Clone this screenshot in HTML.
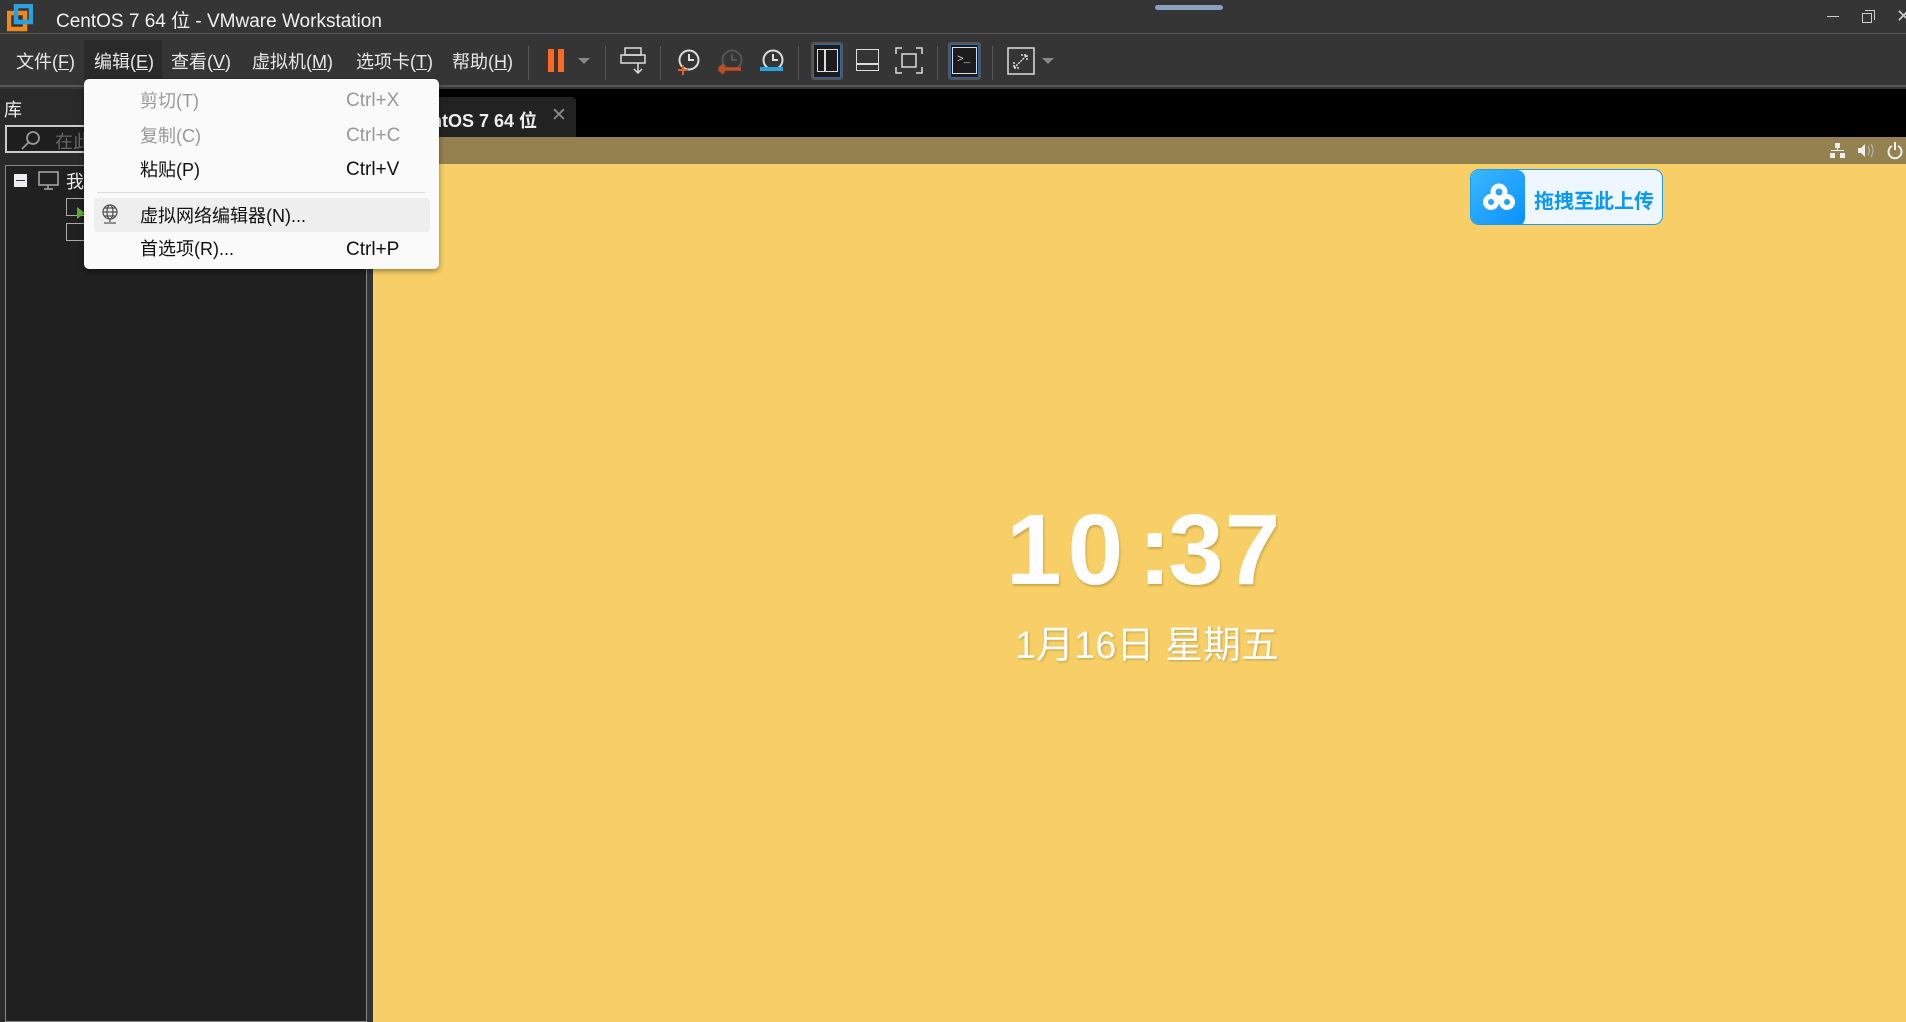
<!DOCTYPE html>
<html><head><meta charset="utf-8"><style>
*{margin:0;padding:0;box-sizing:border-box}
body{width:1906px;height:1022px;overflow:hidden;background:#353535;font-family:"Liberation Sans","Noto Sans CJK SC",sans-serif;position:relative;color:#eee}
.abs{position:absolute}
.menu span{position:absolute;top:48px;font-size:18px;color:#e8e8e8}
.sep{position:absolute;top:46px;width:1px;height:34px;background:#555}
.pop div.t{position:absolute;left:56px;font-size:18px;color:#111}
.pop div.k{position:absolute;left:262px;font-size:19px;color:#111}
</style></head><body>
<!-- title bar -->
<div class="abs" style="left:0;top:0;width:1906px;height:34px;background:#353535;border-bottom:1px solid #5a5a5a"></div>
<svg class="abs" style="left:7px;top:4px" width="26" height="28"><rect x="2" y="9" width="16" height="16" fill="none" stroke="#f08a1c" stroke-width="4.5"/><rect x="9" y="2" width="15" height="16" fill="none" stroke="#2aa0e0" stroke-width="4.5"/></svg>
<div class="abs" style="left:56px;top:6px;font-size:19px;color:#f0f0f0">CentOS 7 64 位 - VMware Workstation</div>
<div class="abs" style="left:1155px;top:5px;width:68px;height:5px;border-radius:3px;background:#8aa0c0"></div>
<div class="abs" style="left:1827px;top:16px;width:12px;height:1px;background:#ccc"></div>
<div class="abs" style="left:1862px;top:13px;width:10px;height:10px;border:1px solid #ccc"></div>
<div class="abs" style="left:1865px;top:10px;width:10px;height:10px;border-top:1px solid #ccc;border-right:1px solid #ccc"></div>
<div class="abs" style="left:1896px;top:6px;font-size:18px;color:#ccc">✕</div>
<!-- menu/toolbar -->
<div class="abs" style="left:0;top:35px;width:1906px;height:52px;background:#353535;border-bottom:2px solid #555"></div>
<div class="abs" style="left:84px;top:40px;width:78px;height:40px;background:#2a2a2a"></div>
<div class="menu">
<span style="left:16px">文件(<u>F</u>)</span><span style="left:94px">编辑(<u>E</u>)</span><span style="left:171px">查看(<u>V</u>)</span><span style="left:252px">虚拟机(<u>M</u>)</span><span style="left:356px">选项卡(<u>T</u>)</span><span style="left:452px">帮助(<u>H</u>)</span>
</div>
<div class="sep" style="left:528px"></div>
<div class="abs" style="left:548px;top:49px;width:6px;height:23px;background:#ff6820"></div>
<div class="abs" style="left:558px;top:49px;width:6px;height:23px;background:#ff6820"></div>
<div class="abs" style="left:578px;top:58px;border:6px solid transparent;border-top:6px solid #888"></div>
<div class="sep" style="left:605px"></div>
<svg class="abs" style="left:620px;top:46px" width="28" height="30" fill="none" stroke="#ddd" stroke-width="1.5"><rect x="5" y="2" width="16" height="7"/><rect x="1" y="9" width="24" height="8"/><path d="M18 17v10M14 23l4 4 4-4"/></svg>
<div class="sep" style="left:660px"></div>
<svg class="abs" style="left:674px;top:48px" width="120" height="30" fill="none" stroke-width="2"><circle cx="15" cy="12" r="9.5" stroke="#ddd"/><path d="M15 6v6h5" stroke="#ddd"/><path d="M4 22h10M9 17v10" stroke="#e06030"/><circle cx="58" cy="12" r="9.5" stroke="#555"/><path d="M58 6v6h5" stroke="#555"/><path d="M45 21h22M45 21l5-4M45 21l5 4" stroke="#c05020" stroke-width="3.5"/><circle cx="99" cy="12" r="9.5" stroke="#ddd"/><path d="M99 6v6h5" stroke="#ddd"/><path d="M86 21h23" stroke="#2aa0e0" stroke-width="4"/></svg>
<div class="sep" style="left:798px"></div>
<div class="abs" style="left:811px;top:42px;width:32px;height:38px;background:#1c1c1c;border:2px solid #555;border-radius:3px;outline:1px solid #2a6ab0;outline-offset:-3px"></div>
<div class="abs" style="left:817px;top:49px;width:21px;height:23px;border:1.5px solid #ddd"></div><div class="abs" style="left:824px;top:49px;width:1.5px;height:23px;background:#ddd"></div>
<div class="abs" style="left:856px;top:49px;width:23px;height:22px;border:1.5px solid #ddd"></div><div class="abs" style="left:856px;top:63px;width:23px;height:1.5px;background:#ddd"></div>
<svg class="abs" style="left:895px;top:47px" width="28" height="27" fill="none" stroke="#ddd" stroke-width="1.5"><path d="M1 7V1h6M21 1h6v6M27 20v6h-6M7 26H1v-6"/><rect x="7" y="7" width="14" height="13"/></svg>
<div class="sep" style="left:937px"></div>
<div class="abs" style="left:948px;top:42px;width:33px;height:38px;background:#1c1c1c;border:2px solid #555;border-radius:3px;outline:1px solid #2a6ab0;outline-offset:-3px"></div>
<div class="abs" style="left:952px;top:47px;width:25px;height:27px;border:1.5px solid #ddd;font:11px 'Liberation Mono',monospace;color:#ddd;padding:6px 0 0 4px">&gt;_</div>
<div class="sep" style="left:992px"></div>
<svg class="abs" style="left:1007px;top:47px" width="28" height="28" fill="none" stroke="#ddd" stroke-width="1.5"><rect x="1" y="1" width="26" height="26"/><path d="M7 21L20 8M14 8h6v6M7 15v6h6" stroke-dasharray="2 1"/></svg>
<div class="abs" style="left:1042px;top:58px;border:6px solid transparent;border-top:6px solid #888"></div>
<!-- left panel -->
<div class="abs" style="left:0;top:89px;width:373px;height:933px;background:#2a2a2a"></div>
<div class="abs" style="left:4px;top:96px;font-size:18px;color:#eee">库</div>
<div class="abs" style="left:5px;top:125px;width:100px;height:28px;border:2px solid #ccc;background:#1e1e1e"></div>
<svg class="abs" style="left:20px;top:129px" width="22" height="22" fill="none" stroke="#999" stroke-width="1.8"><circle cx="13" cy="9" r="6"/><path d="M9 13l-7 7"/></svg>
<div class="abs" style="left:55px;top:128px;font-size:18px;color:#666">在此</div>
<div class="abs" style="left:5px;top:165px;width:362px;height:857px;background:#202020;border:1px solid #888"></div>
<div class="abs" style="left:14px;top:174px;width:13px;height:13px;background:#eee"></div><div class="abs" style="left:16px;top:180px;width:9px;height:1px;background:#335"></div>
<svg class="abs" style="left:38px;top:171px" width="22" height="20" fill="none" stroke="#aaa" stroke-width="1.5"><rect x="1" y="1" width="19" height="13"/><path d="M10 14v4M6 18h9"/></svg>
<div class="abs" style="left:66px;top:168px;font-size:18px;color:#eee">我</div>
<div class="abs" style="left:66px;top:198px;width:20px;height:18px;border:1.5px solid #aaa"></div><div class="abs" style="left:77px;top:207px;border:6px solid transparent;border-left:8px solid #5ab030"></div>
<div class="abs" style="left:66px;top:223px;width:20px;height:18px;border:1.5px solid #aaa"></div>
<div class="abs" style="left:367px;top:89px;width:6px;height:933px;background:#333"></div>
<!-- tabs -->
<div class="abs" style="left:373px;top:89px;width:1533px;height:48px;background:#000"></div>
<div class="abs" style="left:400px;top:97px;width:176px;height:40px;background:#222;border-radius:4px 4px 0 0"></div>
<div class="abs" style="left:408px;top:107px;font-size:18px;font-weight:bold;color:#eee">CentOS 7 64 位</div>
<div class="abs" style="left:551px;top:104px;font-size:19px;color:#888">✕</div>
<!-- VM -->
<div class="abs" style="left:373px;top:137px;width:1533px;height:27px;background:#948150"></div>
<svg class="abs" style="left:1830px;top:142px" width="76" height="18" fill="#eee"><rect x="5" y="1" width="5" height="5"/><rect x="7" y="5" width="1" height="4"/><rect x="1" y="8" width="13" height="1"/><rect x="0" y="11" width="5" height="5"/><rect x="10" y="11" width="5" height="5"/><path d="M28 6h3l4-4v13l-4-4h-3z"/><path d="M38 4q3 4 0 9M41 2q4 6 0 13" stroke="#bbb" fill="none"/><path d="M62 4a6.5 6.5 0 1 0 6 0" stroke="#eee" stroke-width="2" fill="none"/><rect x="64" y="0" width="2" height="8"/></svg>
<div class="abs" style="left:373px;top:164px;width:1533px;height:858px;background:#f8cf66"></div>
<div class="abs" style="left:1470px;top:169px;width:193px;height:56px;background:#eef7ff;border:1.5px solid #1a9cf0;border-radius:9px;overflow:hidden">
<div style="position:absolute;left:0;top:0;width:54px;height:56px;background:linear-gradient(135deg,#3ab8ff,#0a90ff);border-radius:8px"></div>
<svg style="position:absolute;left:12px;top:13px" width="32" height="28" fill="none" stroke="#fff" stroke-width="5"><circle cx="16" cy="9" r="6"/><circle cx="8" cy="19" r="5.5"/><circle cx="24" cy="19" r="5.5"/></svg>
<div style="position:absolute;left:63px;top:15px;font-size:20px;font-weight:bold;color:#0a98f8">拖拽至此上传</div>
</div>
<div class="abs" style="left:1006px;top:500px;font-size:100px;font-weight:bold;color:#fff;text-shadow:1px 2px 2px rgba(120,90,20,.35);line-height:1;letter-spacing:6px">10</div>
<div class="abs" style="left:1138px;top:500px;font-size:100px;font-weight:bold;color:#fff;text-shadow:1px 2px 2px rgba(120,90,20,.35);line-height:1">:</div>
<div class="abs" style="left:1168px;top:500px;font-size:100px;font-weight:bold;color:#fff;text-shadow:1px 2px 2px rgba(120,90,20,.35);line-height:1;letter-spacing:1px">37</div>
<div class="abs" style="left:1015px;top:614px;font-size:38px;color:#fff;text-shadow:1px 1px 2px rgba(120,90,20,.4)">1月16日 星期五</div>
<!-- popup -->
<div class="abs pop" style="left:84px;top:79px;width:355px;height:190px;background:#fafafa;border-radius:5px;box-shadow:0 2px 6px rgba(0,0,0,.4)">
<div class="t" style="top:8px;color:#999">剪切(T)</div><div class="k" style="top:11px;color:#999">Ctrl+X</div>
<div class="t" style="top:43px;color:#999">复制(C)</div><div class="k" style="top:46px;color:#999">Ctrl+C</div>
<div class="t" style="top:77px">粘贴(P)</div><div class="k" style="top:80px">Ctrl+V</div>
<div style="position:absolute;left:13px;top:113px;width:328px;height:1px;background:#ddd"></div>
<div style="position:absolute;left:10px;top:119px;width:336px;height:34px;background:#eeeeee;border-radius:4px"></div>
<svg style="position:absolute;left:17px;top:124px" width="18" height="22" fill="none" stroke="#555" stroke-width="1.3"><circle cx="9" cy="9" r="7"/><ellipse cx="9" cy="9" rx="3" ry="7"/><path d="M2 9h14M3 5h12M3 13h12M9 16v3M3 20h12"/></svg>
<div class="t" style="top:123px">虚拟网络编辑器(N)...</div>
<div class="t" style="top:156px">首选项(R)...</div><div class="k" style="top:160px">Ctrl+P</div>
</div>
</body></html>
